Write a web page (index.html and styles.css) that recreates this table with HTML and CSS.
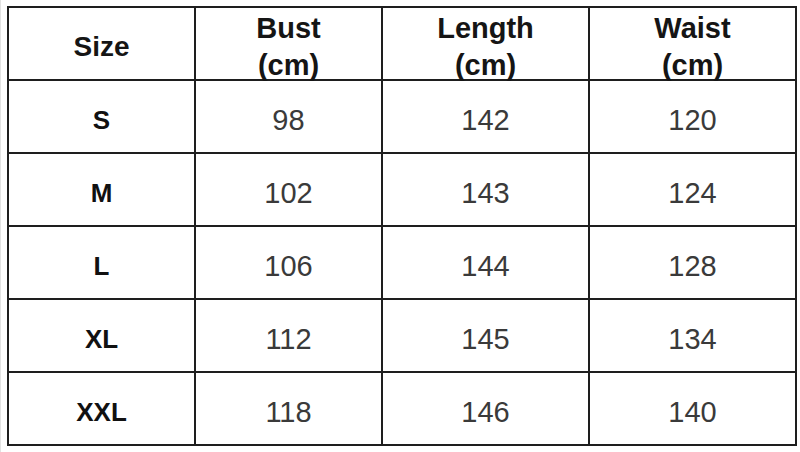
FILE: index.html
```html
<!DOCTYPE html>
<html>
<head>
<meta charset="utf-8">
<link rel="stylesheet" href="styles.css">
</head>
<body>
<div class="page">
  <table class="sizes">
    <colgroup>
      <col class="c1"><col class="c2"><col class="c3"><col class="c4">
    </colgroup>
    <thead>
      <tr>
        <th class="size-head">Size</th>
        <th><div class="two">Bust<br>(cm)</div></th>
        <th><div class="two">Length<br>(cm)</div></th>
        <th><div class="two">Waist<br>(cm)</div></th>
      </tr>
    </thead>
    <tbody>
      <tr><td class="lbl">S</td><td>98</td><td>142</td><td>120</td></tr>
      <tr><td class="lbl">M</td><td>102</td><td>143</td><td>124</td></tr>
      <tr><td class="lbl">L</td><td>106</td><td>144</td><td>128</td></tr>
      <tr><td class="lbl">XL</td><td>112</td><td>145</td><td>134</td></tr>
      <tr><td class="lbl">XXL</td><td>118</td><td>146</td><td>140</td></tr>
    </tbody>
  </table>
</div>
</body>
</html>
```
FILE: styles.css
```css
html, body {
  margin: 0;
  padding: 0;
  background: #ffffff;
}
.page {
  width: 800px;
  height: 452px;
  padding: 6px 0 0 6px;
  box-sizing: border-box;
  overflow: hidden;
  border-left: 1px solid #e2e2e2;
}
.sizes {
  border-collapse: collapse;
  table-layout: fixed;
  width: 789px;
  font-family: "Liberation Sans", Arial, sans-serif;
}
.c1 { width: 187px; }
.c2 { width: 187px; }
.c3 { width: 207px; }
.c4 { width: 207px; }
.sizes th,
.sizes td {
  border: 2px solid #1e1e1e;
  text-align: center;
  padding: 7px 0 0 0;
  height: 64px;
}
.sizes th {
  font-weight: bold;
  font-size: 29px;
  color: #151515;
  vertical-align: top;
  padding-top: 0;
  height: 71px;
}
.sizes th.size-head {
  vertical-align: middle;
  font-size: 28px;
  padding-top: 7px;
  height: 64px;
}
.two {
  line-height: 37px;
  height: 71px;
  padding-top: 2px;
  box-sizing: border-box;
  overflow: visible;
}
.sizes td {
  font-size: 29px;
  color: #3a3a3a;
}
.sizes td.lbl {
  font-weight: bold;
  font-size: 26px;
  color: #111111;
}
```
